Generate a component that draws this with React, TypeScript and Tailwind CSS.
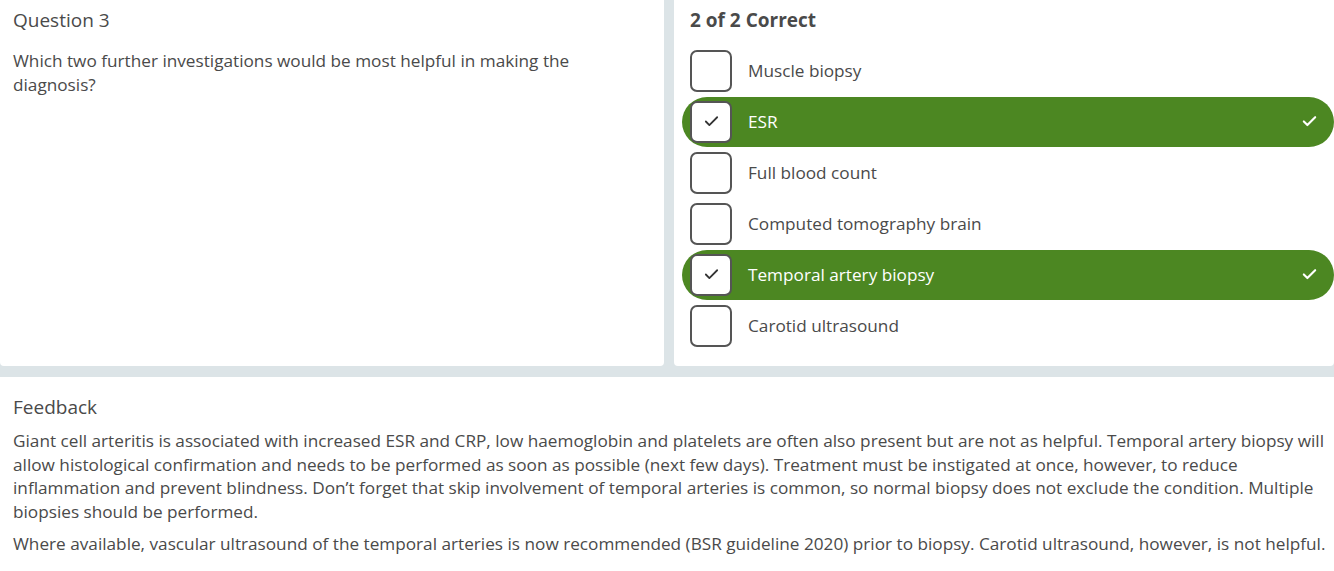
import { Check } from "lucide-react";

type Option = { label: string; correct: boolean };

const options: Option[] = [
  { label: "Muscle biopsy", correct: false },
  { label: "ESR", correct: true },
  { label: "Full blood count", correct: false },
  { label: "Computed tomography brain", correct: false },
  { label: "Temporal artery biopsy", correct: true },
  { label: "Carotid ultrasound", correct: false },
];

function OptionRow({ option }: { option: Option }) {
  return (
    <div
      className={
        option.correct
          ? "flex h-[50px] items-center rounded-full bg-[#4c8722] pl-2 pr-4 -ml-2 my-[0.5px]"
          : "flex h-[50px] items-center pl-0 pr-4 my-[0.5px]"
      }
    >
      <div className="flex size-[42px] shrink-0 items-center justify-center rounded-[7px] border-2 border-[#555] bg-white">
        {option.correct && <Check className="size-[17px] text-[#333]" strokeWidth={2.5} />}
      </div>
      <span
        className={
          option.correct
            ? "ml-4 flex-1 text-[17.2px] text-white"
            : "ml-4 flex-1 text-[17.2px] text-[#4a4a4a]"
        }
      >
        {option.label}
      </span>
      {option.correct && <Check className="size-[17px] text-white" strokeWidth={3} />}
    </div>
  );
}

export default function App() {
  return (
    <div className="min-h-screen bg-white font-['Open_Sans','Noto_Sans',sans-serif] text-[#4a4a4a]">
      {/* 문제 + 선택지 */}
      <div className="flex gap-[10px] bg-[#dce4e7] pb-[11px]">
        <div className="w-[664px] shrink-0 rounded-b-[4px] bg-white px-[13px] pt-[7px]">
          <h2 className="text-[19px] leading-[26px]">Question 3</h2>
          <p className="mt-[16px] max-w-[600px] text-[17.2px] leading-[24px]">
            Which two further investigations would be most helpful in making the diagnosis?
          </p>
        </div>
        <div className="flex-1 rounded-b-[4px] bg-white pl-[16px] pt-[7px] pb-[15px]">
          <h3 className="text-[19px] font-bold leading-[26px]">2 of 2 Correct</h3>
          <div className="mt-[12px] flex flex-col">
            {options.map((o) => (
              <OptionRow key={o.label} option={o} />
            ))}
          </div>
        </div>
      </div>

      {/* 피드백 */}
      <div className="pl-[13px] pr-[6px] pt-[17px] pb-4">
        <h2 className="text-[19px] leading-[26px]">Feedback</h2>
        <p className="mt-[9px] text-[17.2px] leading-[23.6px]">
          Giant cell arteritis is associated with increased ESR and CRP, low haemoglobin and platelets are often also
          present but are not as helpful. Temporal artery biopsy will allow histological confirmation and needs to be
          performed as soon as possible (next few days). Treatment must be instigated at once, however, to reduce
          inflammation and prevent blindness. Don’t forget that skip involvement of temporal arteries is common, so
          normal biopsy does not exclude the condition. Multiple biopsies should be performed.
        </p>
        <p className="mt-[9px] text-[17.2px] leading-[23.6px]">
          Where available, vascular ultrasound of the temporal arteries is now recommended (BSR guideline 2020) prior
          to biopsy. Carotid ultrasound, however, is not helpful.
        </p>
      </div>
    </div>
  );
}
